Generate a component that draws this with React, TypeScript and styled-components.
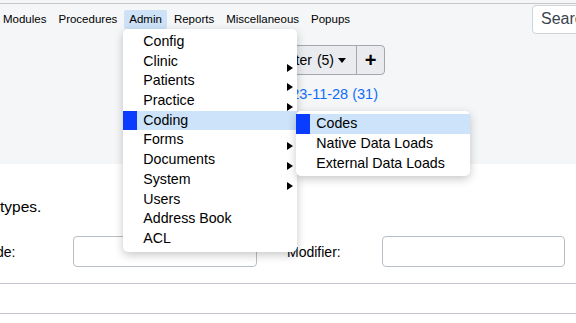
import styled, { createGlobalStyle, css } from "styled-components"

const GlobalStyle = createGlobalStyle`
  html, body {
    margin: 0;
    padding: 0;
  }
  body {
    font-family: "Liberation Sans", Arial, sans-serif;
    background: #fff;
    width: 576px;
    height: 323px;
    overflow: hidden;
  }
`

const codingItems = ["Codes", "Native Data Loads", "External Data Loads"]

const adminItems = [
  { label: "Config" },
  { label: "Clinic", sub: true },
  { label: "Patients", sub: true },
  { label: "Practice", sub: true },
  { label: "Coding", active: true },
  { label: "Forms", sub: true },
  { label: "Documents", sub: true },
  { label: "System", sub: true },
  { label: "Users" },
  { label: "Address Book" },
  { label: "ACL" },
]

const navItems = ["Modules", "Procedures", "Admin", "Reports", "Miscellaneous", "Popups"]

const App = () => {
  return (
    <>
      <GlobalStyle />
      <Header>
        <TopRule />
        <NavBar>
          <NavList>
            {navItems.map((item) => (
              <NavItem key={item} $active={item === "Admin"}>
                {item}
                {item === "Admin" && (
                  <Dropdown>
                    {adminItems.map((a) => (
                      <MenuItem key={a.label} $active={a.active} $sub={a.sub}>
                        {a.label}
                        {a.active && (
                          <SubMenu>
                            {codingItems.map((c, i) => (
                              <MenuItem key={c} $active={i === 0}>
                                {c}
                              </MenuItem>
                            ))}
                          </SubMenu>
                        )}
                      </MenuItem>
                    ))}
                  </Dropdown>
                )}
              </NavItem>
            ))}
          </NavList>
          <Search placeholder="Search" />
        </NavBar>
        <Tools>
          <BtnGroup>
            <MainBtn>
              Filter<Count>(5)</Count>
              <Caret />
            </MainBtn>
            <PlusBtn>+</PlusBtn>
          </BtnGroup>
          <DateLink href="#">2023-11-28 (31)</DateLink>
        </Tools>
      </Header>
      <Content>
        <Intro>types.</Intro>
        <FormRow>
          <Label $shift={-22}>Code:</Label>
          <Field />
          <Label $shift={30}>Modifier:</Label>
          <Field />
        </FormRow>
        <Divider $top={16} />
        <Divider $top={29} />
      </Content>
    </>
  )
}

export default App

const Header = styled.div`
  background: #f5f6f8;
  height: 164px;
  padding-top: 3px;
  box-sizing: border-box;
`

const TopRule = styled.div`
  height: 1px;
  background: #c4c6c9;
`

const NavBar = styled.div`
  display: flex;
  align-items: center;
  justify-content: space-between;
  height: 30px;
`

const NavList = styled.ul`
  display: flex;
  gap: 2px;
  list-style: none;
  margin: 0 0 0 -2px;
  padding: 0;
`

const NavItem = styled.li<{ $active?: boolean }>`
  position: relative;
  height: 19px;
  line-height: 19px;
  padding: 0 5px;
  font-size: 11.5px;
  color: #000;
  border-radius: 2px;
  background: ${(p) => (p.$active ? "#cde2f7" : "transparent")};
`

const Dropdown = styled.ul`
  position: absolute;
  left: -1px;
  top: 19px;
  z-index: 10;
  width: 174px;
  margin: 0;
  padding: 3.5px 0 3px;
  list-style: none;
  background: #fff;
  border-radius: 5px;
  box-shadow: 0 3px 10px rgba(0, 0, 0, 0.22);
`

const SubMenu = styled(Dropdown)`
  left: 173px;
  top: 0;
  z-index: 11;
`

const MenuItem = styled.li<{ $active?: boolean; $sub?: boolean }>`
  position: relative;
  height: 19.7px;
  line-height: 19.7px;
  padding-left: 20px;
  font-size: 14.2px;
  color: #000;
  white-space: nowrap;
  background: ${(p) => (p.$active ? "#cce3fa" : "transparent")};
  ${(p) =>
    p.$active &&
    css`
      &::before {
        content: "";
        position: absolute;
        left: 0;
        top: 0;
        width: 14px;
        height: 100%;
        background: #0a3cff;
      }
    `}
  ${(p) =>
    p.$sub &&
    css`
      &::after {
        content: "";
        position: absolute;
        left: 164px;
        top: 12px;
        border-left: 6px solid #000;
        border-top: 4.5px solid transparent;
        border-bottom: 4.5px solid transparent;
      }
    `}
`

const Search = styled.input`
  width: 64px;
  height: 29px;
  margin-right: -20px;
  box-sizing: border-box;
  border: 1px solid #ced4da;
  border-radius: 4px;
  padding: 0 8px;
  font-family: inherit;
  font-size: 16px;
  background: #fff;
  &::placeholder {
    color: #3a4350;
  }
`

const Tools = styled.div`
  width: 385px;
  display: flex;
  flex-direction: column;
  align-items: flex-end;
  padding-top: 11px;
`

const BtnGroup = styled.div`
  display: flex;
  height: 30px;
  box-sizing: border-box;
  border: 1px solid #a3a8ae;
  border-radius: 4px;
  background: #e9ebee;
  overflow: hidden;
`

const MainBtn = styled.button`
  display: flex;
  align-items: center;
  padding: 0 10px;
  border: 0;
  border-right: 1px solid #a3a8ae;
  background: transparent;
  font-family: inherit;
  font-size: 14px;
  color: #000;
`

const Count = styled.span`
  margin-left: 5px;
`

const Caret = styled.span`
  margin-left: 4px;
  border-top: 5px solid #000;
  border-left: 4px solid transparent;
  border-right: 4px solid transparent;
`

const PlusBtn = styled.button`
  width: 27px;
  padding: 0;
  border: 0;
  background: transparent;
  font-family: inherit;
  font-size: 20px;
  font-weight: 700;
  color: #000;
`

const DateLink = styled.a`
  margin-top: 11px;
  margin-right: 7px;
  font-size: 14.5px;
  line-height: 16px;
  color: #0d6efd;
  text-decoration: none;
`

const Content = styled.div`
  padding-top: 34px;
`

const Intro = styled.p`
  margin: 0;
  font-size: 15.5px;
  line-height: 17px;
  color: #000;
`

const FormRow = styled.div`
  display: grid;
  grid-template-columns: 73px 184px 125px 183px;
  align-items: center;
  margin-top: 21px;
  height: 31px;
`

const Label = styled.label<{ $shift: number }>`
  margin-left: ${(p) => p.$shift}px;
  font-size: 14px;
  color: #000;
  white-space: nowrap;
`

const Field = styled.input`
  height: 31px;
  box-sizing: border-box;
  border: 1px solid #b8bec6;
  border-radius: 4px;
  background: #fff;
`

const Divider = styled.hr<{ $top: number }>`
  margin: ${(p) => p.$top}px 0 0;
  border: 0;
  border-top: 1px solid #c3c7cd;
`
